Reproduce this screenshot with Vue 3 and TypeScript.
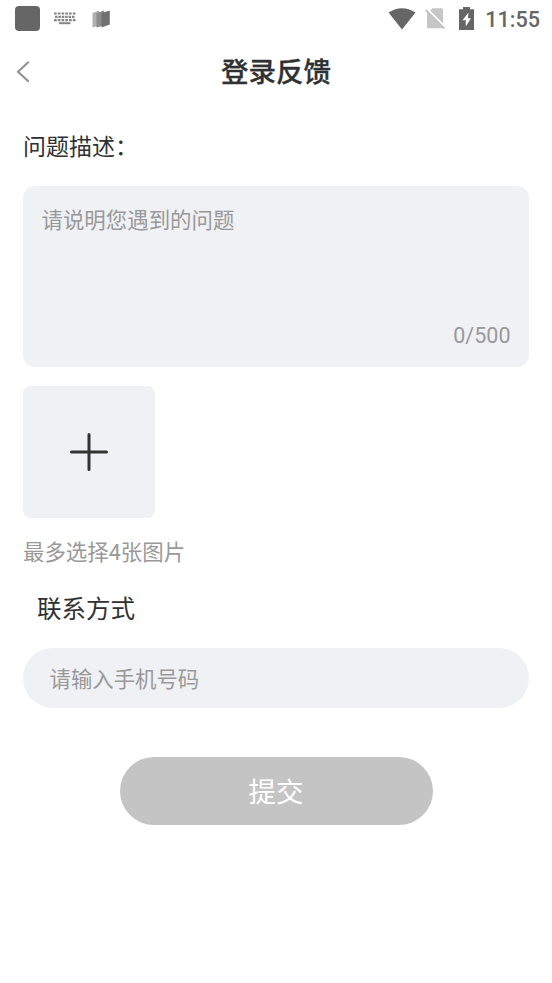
<script setup lang="ts">
import { computed, ref } from 'vue'

const MAX_LENGTH = 500
const MAX_IMAGES = 4

const description = ref<string>('')
const phone = ref<string>('')
const counter = computed<string>(() => `${description.value.length}/${MAX_LENGTH}`)
const ready = computed<boolean>(() => description.value.trim() !== '' && phone.value.trim() !== '')
</script>

<template>
  <div class="page">
    <div class="status">
      <div class="status-left">
        <span class="app-dot"></span>
        <svg class="keyboard" width="22" height="13" viewBox="0 0 22 13">
          <path d="M0 1.500H21.500M0 8.100H21.500" stroke="#858585" stroke-width="2.200" stroke-dasharray="2.700 1.060" />
          <path d="M1 4.800H20.500" stroke="#858585" stroke-width="2.200" stroke-dasharray="2.500 0.900" />
          <path d="M5 11.200H16.500" stroke="#858585" stroke-width="2" />
        </svg>
        <svg class="cards" width="18" height="18" viewBox="0 0 18 18">
          <path d="M0.500 3L7 0.500V15.500L0.500 17.500Z" fill="#b0b0b0" />
          <path d="M4.500 3L12 0.500V15.500L4.500 17.500Z" fill="#8c8c8c" />
          <path d="M9.500 3L17.800 0.500V14.500L9.500 17.500Z" fill="#707070" />
        </svg>
      </div>
      <div class="status-right">
        <svg class="wifi" width="28" height="22" viewBox="0 0 28 22">
          <path d="M0.500 4.500Q14 -4 27.500 4.500L14 21.500Z" fill="#666" />
        </svg>
        <svg class="sim" width="21" height="22" viewBox="0 0 21 22">
          <path d="M7.500 0.300H16.500Q18 0.300 18 1.800V15.500L5.200 2.600Z" fill="#c6c6c6" />
          <path d="M2 3.800L18 19.800Q17.500 20.200 16.500 20.200H3.500Q2 20.200 2 18.700Z" fill="#c6c6c6" />
          <path d="M0.600 1.800L19.500 20.700" stroke="#c0c0c0" stroke-width="1.800" />
        </svg>
        <svg class="battery" width="15" height="23" viewBox="0 0 15 23">
          <path d="M4 0H11V2.300H15V23H0V2.300H4Z" fill="#666" />
          <path d="M9.500 5.500L3.500 13.200H6.800V19.500L12 11.200H8.900Z" fill="#fff" />
        </svg>
        <span class="clock">11:55</span>
      </div>
    </div>

    <header class="nav">
      <button class="back" type="button" aria-label="返回">
        <svg width="14" height="22" viewBox="0 0 14 22">
          <path d="M12 1.500L2 10.800L12 20" fill="none" stroke="#929292" stroke-width="2.200" stroke-linecap="round" stroke-linejoin="round" />
        </svg>
      </button>
      <h1 class="title">登录反馈</h1>
    </header>

    <main class="form">
      <h2 class="label">问题描述：</h2>
      <div class="area">
        <textarea v-model="description" class="area-input" :maxlength="MAX_LENGTH" placeholder="请说明您遇到的问题"></textarea>
        <span class="counter">{{ counter }}</span>
      </div>
      <button class="add" type="button" aria-label="添加图片">
        <svg width="38" height="38" viewBox="0 0 38 38">
          <path d="M1.500 19H36.500M19 1.500V36.500" stroke="#303331" stroke-width="3" stroke-linecap="round" />
        </svg>
      </button>
      <p class="hint">最多选择{{ MAX_IMAGES }}张图片</p>
      <h2 class="label contact">联系方式</h2>
      <input v-model="phone" class="phone" type="tel" placeholder="请输入手机号码" />
      <button class="submit" :class="{ ready }" type="button">提交</button>
    </main>
  </div>
</template>

<style>
body {
  margin: 0;
  background: #fff;
}
</style>

<style scoped>
.page {
  box-sizing: border-box;
  width: 552px;
  height: 983px;
  overflow: hidden;
  background: #fff;
  color: #303133;
  font-family: Roboto, "Noto Sans CJK SC", sans-serif;
}

button,
input,
textarea {
  margin: 0;
  padding: 0;
  border: 0;
  outline: none;
  font-family: inherit;
}

svg {
  display: block;
}

.status {
  display: flex;
  justify-content: space-between;
  height: 37px;
  padding: 0 12px 0 15px;
}

.status-left,
.status-right {
  display: flex;
  align-items: center;
}

.app-dot {
  width: 25px;
  height: 25px;
  border-radius: 4px;
  background: #666;
}

.keyboard {
  margin-left: 14px;
}

.cards {
  margin-left: 16px;
}

.sim {
  margin-left: 9px;
}

.battery {
  margin-left: 13px;
}

.clock {
  margin-left: 11px;
  padding-top: 2px;
  color: #666;
  font-size: 21.600px;
  font-weight: 500;
  line-height: 26px;
}

.nav {
  display: grid;
  grid-template-columns: 60px 1fr 60px;
  align-items: center;
  height: 70px;
}

.back {
  display: flex;
  padding-left: 16px;
  background: transparent;
}

.title {
  margin: 0;
  padding-top: 2px;
  text-align: center;
  font-size: 27.500px;
  font-weight: 500;
  line-height: 40px;
  -webkit-text-stroke: 0.300px #303133;
}

.form {
  display: flex;
  flex-direction: column;
  padding: 25px 23px 0;
}

.label {
  margin: 0;
  font-size: 23px;
  font-weight: 400;
  line-height: 32px;
}

.area {
  display: flex;
  flex-direction: column;
  box-sizing: border-box;
  height: 181px;
  margin-top: 22px;
  padding: 19px 18.500px 16px;
  border-radius: 12px;
  background: #f0f1f5;
}

.area-input {
  flex: 1;
  resize: none;
  background: transparent;
  color: #303133;
  font-size: 21.450px;
  line-height: 32px;
}

.area-input::placeholder,
.phone::placeholder {
  color: #999;
  opacity: 1;
}

.counter {
  align-self: flex-end;
  color: #999;
  font-size: 21.500px;
  line-height: 30px;
}

.add {
  display: flex;
  align-items: center;
  justify-content: center;
  width: 132px;
  height: 132px;
  margin-top: 19px;
  border-radius: 8px;
  background: #f0f1f5;
}

.hint {
  margin: 19px 0 0;
  color: #999;
  font-size: 21.450px;
  line-height: 32px;
}

.contact {
  margin: 24px 0 0 14px;
  font-size: 24.500px;
  line-height: 34px;
}

.phone {
  box-sizing: border-box;
  height: 60px;
  margin-top: 21px;
  padding: 2px 26.500px 0;
  border-radius: 30px;
  background: #f0f1f5;
  color: #303133;
  font-size: 21.400px;
}

.submit {
  align-self: center;
  width: 313px;
  height: 68px;
  margin-top: 49px;
  padding-bottom: 2px;
  border-radius: 34px;
  background: #c4c4c4;
  color: #fff;
  font-size: 27.500px;
}

.submit.ready {
  background: #303133;
}
</style>
